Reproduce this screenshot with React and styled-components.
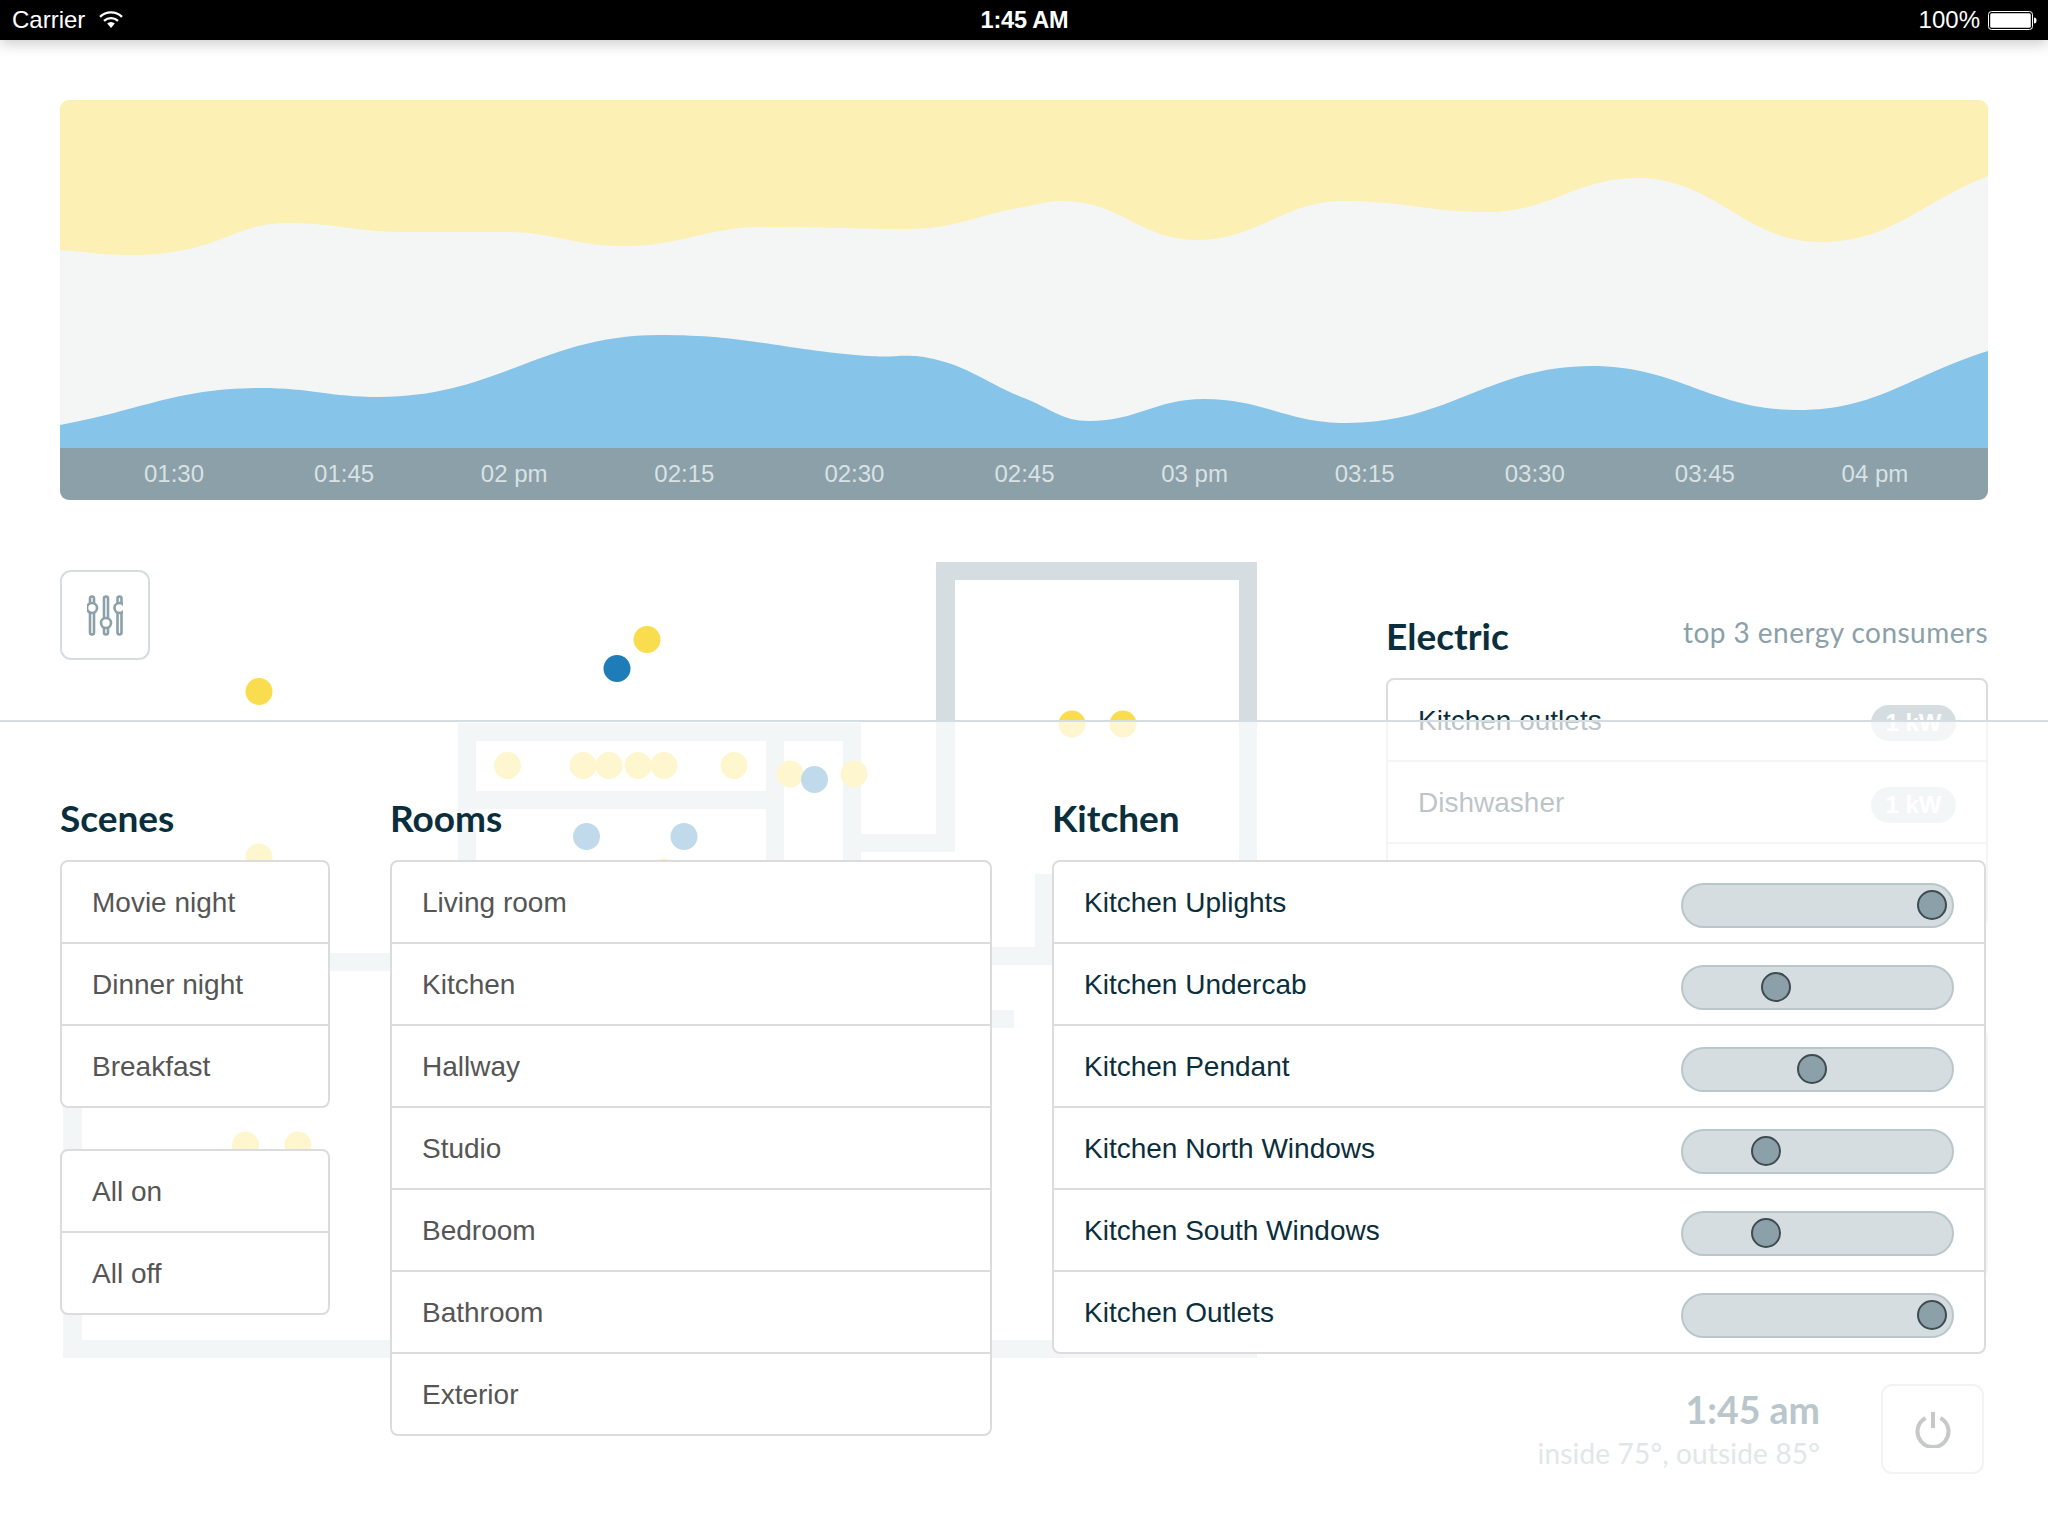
import React from "react";
import styled, { createGlobalStyle } from "styled-components";

const Global = createGlobalStyle`
  html, body { margin: 0; padding: 0; background: #fff; }
  * { box-sizing: border-box; }
  body { font-family: "Liberation Sans", Arial, sans-serif; }
`;

const Screen = styled.div`
  position: relative;
  width: 2048px;
  height: 1536px;
  overflow: hidden;
  background: #fff;
`;

/* status bar */
const StatusBar = styled.header`
  position: relative;
  z-index: 5;
  height: 40px;
  background: #000;
  color: #fff;
  display: grid;
  grid-template-columns: 1fr auto 1fr;
  align-items: center;
  padding: 0 11px 0 12px;
  font-size: 24px;
  box-shadow: 0 4px 14px rgba(0, 0, 0, 0.2);
`;
const StatusLeft = styled.div`
  display: flex;
  align-items: center;
  gap: 14px;
`;
const StatusTime = styled.div`
  font-weight: 700;
  font-size: 23.5px;
  letter-spacing: -0.2px;
`;
const StatusRight = styled.div`
  display: flex;
  justify-content: flex-end;
  align-items: center;
  gap: 8px;
`;

/* chart */
const ChartSection = styled.section`
  padding: 60px 60px 0;
`;
const ChartCard = styled.div`
  height: 400px;
  border-radius: 9px;
  overflow: hidden;
  background: #f4f6f5;
  display: flex;
  flex-direction: column;
`;
const ChartArea = styled.svg`
  display: block;
  flex: 1;
  width: 100%;
  min-height: 0;
`;
const TimeAxis = styled.div`
  height: 52px;
  background: #8ba0a8;
  color: #d9e2e5;
  font-size: 24px;
  padding: 0 28px 0 29px;
  display: grid;
  grid-template-columns: repeat(11, 1fr);
  align-items: center;
  text-align: center;
`;

/* floor section */
const FloorSection = styled.section`
  position: relative;
  padding: 70px 60px 0;
  display: flex;
  justify-content: space-between;
  align-items: flex-start;
`;
const FloorPlan = styled.svg`
  position: absolute;
  left: 0;
  top: 0;
  width: 2048px;
  height: 1536px;
  z-index: 0;
`;
const IconButton = styled.button`
  position: relative;
  z-index: 1;
  width: 90px;
  height: 90px;
  padding: 0;
  background: #fff;
  border: 2px solid #d5dde0;
  border-radius: 11px;
  display: flex;
  align-items: center;
  justify-content: center;
`;
const ElectricColumn = styled.div`
  position: relative;
  z-index: 1;
  width: 602px;
  margin-top: 36px;
  display: flex;
  flex-direction: column;
  gap: 103px;
`;
const ElectricHead = styled.div`
  height: 72px;
  margin-bottom: -103px;
  padding-top: 6px;
  display: flex;
  justify-content: space-between;
  align-items: flex-start;
`;
const Title = styled.h2`
  margin: 0;
  font-family: Lato, sans-serif;
  font-weight: 700;
  font-size: 37px;
  line-height: 44px;
  color: #0b2e3c;
`;
const ElectricTitle = styled(Title)`
  padding-top: 2px;
`;
const Subtitle = styled.div`
  font-family: Lato, sans-serif;
  font-size: 28px;
  line-height: 41px;
  letter-spacing: 0.45px;
  color: #8ba0a8;
`;
const Panel = styled.ul`
  list-style: none;
  margin: 0;
  padding: 0;
  background: #fff;
  border: 2px solid #dcdcdc;
  border-radius: 8px;
  position: relative;
`;
const Row = styled.li`
  height: 82px;
  border-top: 2px solid #dcdcdc;
  padding: 2px 30px 0;
  display: flex;
  align-items: center;
  justify-content: space-between;
  font-size: 28px;
  color: ${(p) => p.$color || "#555"};
  &:first-child {
    border-top: 0;
    height: 80px;
  }
`;
const Badge = styled.span`
  width: 85px;
  height: 36px;
  margin-top: 4px;
  border-radius: 18px;
  background: #d5dde0;
  color: #fff;
  font-size: 24px;
  font-weight: 700;
  text-align: center;
  line-height: 36px;
`;

/* drawer */
const Drawer = styled.section`
  position: absolute;
  z-index: 2;
  left: 0;
  right: 0;
  top: 720px;
  bottom: 0;
  background: rgba(255, 255, 255, 0.72);
  border-top: 2px solid #d5dde0;
  padding: 74px 0 0 60px;
  display: grid;
  grid-template-columns: 270px 602px 934px;
  column-gap: 60px;
  align-items: start;
`;
const Column = styled.div`
  display: flex;
  flex-direction: column;
  align-items: stretch;
`;
const ColumnTitle = styled(Title)`
  height: 64px;
`;
const Stack = styled.div`
  display: flex;
  flex-direction: column;
  gap: 41px;
`;
const Track = styled.div`
  position: relative;
  width: 273px;
  height: 45px;
  margin-top: 5px;
  background: #d5dde0;
  border: 2px solid #b9c7cc;
  border-radius: 23px;
`;
const Thumb = styled.div`
  position: absolute;
  top: 5px;
  left: ${(p) => p.$left}px;
  width: 30px;
  height: 30px;
  border-radius: 50%;
  background: #8ba0a8;
  border: 2px solid #3e4b50;
`;
const StatusFoot = styled.div`
  margin-top: 30px;
  padding-right: 2px;
  display: flex;
  justify-content: flex-end;
  align-items: flex-start;
  gap: 61px;
`;
const Readout = styled.div`
  text-align: right;
  padding-top: 3px;
`;
const ReadoutTime = styled.div`
  font-family: Lato, sans-serif;
  font-weight: 700;
  font-size: 37.5px;
  line-height: 46px;
  color: #b9c7cc;
`;
const ReadoutTemp = styled.div`
  font-family: Lato, sans-serif;
  font-size: 28px;
  line-height: 40px;
  letter-spacing: 0.17px;
  color: #e1e7e9;
`;
const PowerButton = styled.button`
  width: 103px;
  height: 90px;
  padding: 0;
  background: #fff;
  border: 2px solid #f1f3f4;
  border-radius: 11px;
  display: flex;
  align-items: center;
  justify-content: center;
`;

/* data */
const CARD = { x0: 60, y0: 100, w: 1928, h: 348 };
const yellowLine = [[60,250],[131,255],[183,250],[287,223],[405,232],[503,232],[624,246],[764,227],[908,229],[1024,207],[1063,201],[1197,240],[1344,201],[1488,212],[1638,178],[1821,242],[1988,176]];
const blueLine = [[60,425],[261,388],[379,397],[660,335],[869,356],[934,359],[1024,398],[1089,421],[1204,399],[1347,423],[1592,366],[1798,410],[1988,351]];

function smooth(pts) {
  const p = pts.map(([x, y]) => [x - CARD.x0, y - CARD.y0]);
  let d = `M${p[0][0]} ${p[0][1]}`;
  const slope = (i) => {
    if (i === 0 || i === p.length - 1) {
      const [a, b] = i === 0 ? [p[0], p[1]] : [p[i - 1], p[i]];
      return (b[1] - a[1]) / (b[0] - a[0]);
    }
    const s0 = (p[i][1] - p[i - 1][1]) / (p[i][0] - p[i - 1][0]);
    const s1 = (p[i + 1][1] - p[i][1]) / (p[i + 1][0] - p[i][0]);
    if (s0 * s1 <= 0) return 0;
    return (s0 + s1) / 2;
  };
  for (let i = 0; i < p.length - 1; i++) {
    const dx = (p[i + 1][0] - p[i][0]) * 0.42;
    d += ` C${p[i][0] + dx} ${p[i][1] + slope(i) * dx} ${p[i + 1][0] - dx} ${p[i + 1][1] - slope(i + 1) * dx} ${p[i + 1][0]} ${p[i + 1][1]}`;
  }
  return d;
}

const times = ["01:30","01:45","02 pm","02:15","02:30","02:45","03 pm","03:15","03:30","03:45","04 pm"];
const scenes = ["Movie night", "Dinner night", "Breakfast"];
const allSwitch = ["All on", "All off"];
const rooms = ["Living room", "Kitchen", "Hallway", "Studio", "Bedroom", "Bathroom", "Exterior"];
const lights = [
  ["Kitchen Uplights", 234],
  ["Kitchen Undercab", 78],
  ["Kitchen Pendant", 114],
  ["Kitchen North Windows", 68],
  ["Kitchen South Windows", 68],
  ["Kitchen Outlets", 234],
];
const walls = [
  [936, 562, 321, 18],
  [936, 562, 19, 290],
  [1239, 562, 18, 796],
  [861, 834, 94, 18],
  [458, 723, 403, 18],
  [458, 723, 18, 260],
  [843, 723, 18, 260],
  [476, 791, 290, 18],
  [766, 723, 18, 260],
  [330, 953, 80, 18],
  [991, 947, 61, 18],
  [1035, 874, 17, 91],
  [991, 1010, 23, 18],
  [63, 1100, 19, 258],
  [63, 1340, 1194, 18],
];
const Y = "#fadd4f";
const B = "#1e7cb8";
const dots = [
  [259, 691.5, Y], [647, 639.5, Y], [617, 668.5, B],
  [1072, 724, Y], [1123, 724, Y],
  [507.5, 765.5, Y], [583, 765.5, Y], [609, 765.5, Y],
  [638, 765.5, Y], [664, 765.5, Y], [734, 765.5, Y],
  [790, 774, Y], [854, 774, Y], [814.5, 779.5, B],
  [586.5, 836.5, B], [684, 836.5, B], [664, 872, Y],
  [259, 857, Y], [245.5, 1145, Y], [298, 1145, Y],
];

const WifiIcon = () => (
  <svg width="24" height="18" viewBox="0 0 24 18">
    <path d="M1 5.8 A16 16 0 0 1 23 5.8" fill="none" stroke="#fff" strokeWidth="2.4" />
    <path d="M5 9.8 A10.5 10.5 0 0 1 19 9.8" fill="none" stroke="#fff" strokeWidth="2.4" />
    <path d="M12 17 L8.2 12.6 A5.4 5.4 0 0 1 15.8 12.6 Z" fill="#fff" />
  </svg>
);
const BatteryIcon = () => (
  <svg width="49" height="19" viewBox="0 0 49 19">
    <rect x="0.5" y="0.5" width="44" height="18" rx="3" fill="none" stroke="#fff" />
    <rect x="2.2" y="2.2" width="40.6" height="14.6" rx="1.5" fill="#fff" />
    <path d="M46 6.5 a2.5 3 0 0 1 0 6 Z" fill="#fff" />
  </svg>
);
const SlidersIcon = () => (
  <svg width="36" height="44" viewBox="0 0 36 44" fill="none" stroke="#8ba0a8" strokeWidth="2.6">
    <rect x="3" y="3.5" width="4" height="38" rx="2" />
    <rect x="17" y="3.5" width="4" height="38" rx="2" />
    <rect x="30.5" y="3.5" width="4" height="38" rx="2" />
    <circle cx="5" cy="15" r="5" fill="#fff" />
    <circle cx="19" cy="30" r="5" fill="#fff" />
    <circle cx="32.5" cy="15" r="5" fill="#fff" />
  </svg>
);
const PowerIcon = () => (
  <svg width="38" height="38" viewBox="0 0 38 38" fill="none" stroke="#c6c8c9" strokeWidth="4">
    <path d="M19 2 V18" />
    <path d="M11.5 8 A15.5 15.5 0 1 0 26.5 8" />
  </svg>
);

export default function App() {
  return (
    <Screen>
      <Global />
      <StatusBar>
        <StatusLeft>Carrier <WifiIcon /></StatusLeft>
        <StatusTime>1:45 AM</StatusTime>
        <StatusRight>100% <BatteryIcon /></StatusRight>
      </StatusBar>
      <ChartSection>
        <ChartCard>
          <ChartArea viewBox={`0 0 ${CARD.w} ${CARD.h}`} preserveAspectRatio="none">
            <path d={`${smooth(yellowLine)} L${CARD.w} 0 L0 0 Z`} fill="#fcf0b4" />
            <path d={`${smooth(blueLine)} L${CARD.w} ${CARD.h} L0 ${CARD.h} Z`} fill="#86c4e9" />
          </ChartArea>
          <TimeAxis>
            {times.map((t) => <span key={t}>{t}</span>)}
          </TimeAxis>
        </ChartCard>
      </ChartSection>
      <FloorSection>
        <IconButton aria-label="settings"><SlidersIcon /></IconButton>
        <ElectricColumn>
          <ElectricHead>
            <ElectricTitle>Electric</ElectricTitle>
            <Subtitle>top 3 energy consumers</Subtitle>
          </ElectricHead>
          <Panel>
            <Row $color="#0b2e3c">Kitchen outlets<Badge>1 kW</Badge></Row>
            <Row $color="#0b2e3c">Dishwasher<Badge>1 kW</Badge></Row>
            <Row $color="#0b2e3c">Kitchen Pendant<Badge>1 kW</Badge></Row>
          </Panel>
          <Panel aria-hidden="true">
            <Row />
            <Row />
            <Row />
          </Panel>
        </ElectricColumn>
      </FloorSection>
      <FloorPlan viewBox="0 0 2048 1536">
        {walls.map(([x, y, w, h], i) => <rect key={i} x={x} y={y} width={w} height={h} fill="#d5dde0" />)}
        {dots.map(([cx, cy, c], i) => <circle key={i} cx={cx} cy={cy} r="13.5" fill={c} />)}
      </FloorPlan>
      <Drawer>
        <Column>
          <ColumnTitle>Scenes</ColumnTitle>
          <Stack>
            <Panel>{scenes.map((s) => <Row key={s}>{s}</Row>)}</Panel>
            <Panel>{allSwitch.map((s) => <Row key={s}>{s}</Row>)}</Panel>
          </Stack>
        </Column>
        <Column>
          <ColumnTitle>Rooms</ColumnTitle>
          <Panel>{rooms.map((s) => <Row key={s}>{s}</Row>)}</Panel>
        </Column>
        <Column>
          <ColumnTitle>Kitchen</ColumnTitle>
          <Panel>
            {lights.map(([name, left]) => (
              <Row key={name} $color="#0b2e3c">
                {name}
                <Track><Thumb $left={left} /></Track>
              </Row>
            ))}
          </Panel>
          <StatusFoot>
            <Readout>
              <ReadoutTime>1:45 am</ReadoutTime>
              <ReadoutTemp>inside 75°, outside 85°</ReadoutTemp>
            </Readout>
            <PowerButton aria-label="power"><PowerIcon /></PowerButton>
          </StatusFoot>
        </Column>
      </Drawer>
    </Screen>
  );
}
